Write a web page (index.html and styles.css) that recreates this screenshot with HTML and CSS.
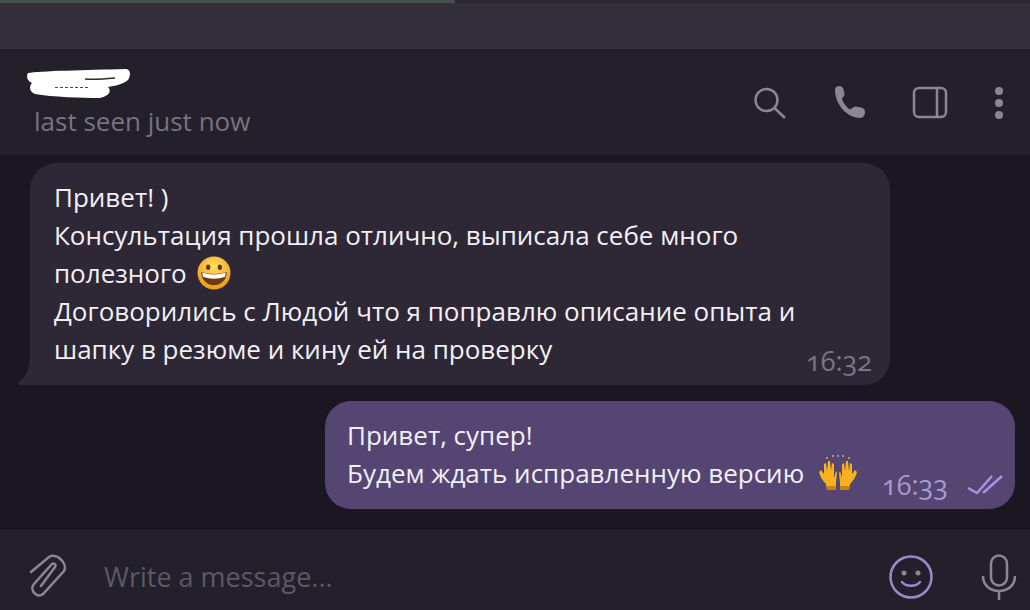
FILE: index.html
```html
<!DOCTYPE html>
<html lang="en">
<head>
  <meta charset="UTF-8">
  <title>Chat</title>
  <meta name="viewport" content="width=device-width, initial-scale=1.0">
  <link rel="stylesheet" href="styles.css">
</head>
<body>
  <div class="topband"><div class="loadbar"><div class="progress"></div></div></div>

  <header class="chat-head">
    <div class="peer">
      <svg class="scribble" width="110" height="34" viewBox="0 0 110 34">
        <path d="M1 6 C12 4 60 3 98 2 C104 2 104 8 101 13 C96 17 88 19 81 20 C84 23 84 28 73 31 C55 31 25 30 8 27 C2 25 2 19 5 16 C0 14 -1 9 1 6 Z" fill="#fff"/>
        <path d="M28 20.500 H62" stroke="#4a4650" stroke-width="1" stroke-dasharray="3 2"/>
        <path d="M58 12 C68 13 78 12 88 11" stroke="#2e2a36" stroke-width="1.500" fill="none"/>
      </svg>
      <div class="status">last seen just now</div>
    </div>
    <div class="head-icons">
      <svg width="34" height="34" viewBox="0 0 34 34" fill="none" stroke="#8b8792" stroke-width="2.500">
        <circle cx="14.500" cy="14" r="11"/>
        <path d="M22.500 22 L33 32"/>
      </svg>
      <svg width="34" height="34" viewBox="0 0 34 34" fill="#8b8792">
        <path d="M3 4 C3 1.500 5 0 7 0 C9.500 0 11 1.500 11.500 3.500 L12.500 8 C12.500 10 11 11 10 12 C10.500 16 14 21 18 23.500 C20 22.500 21.500 20.500 24 20.500 L29 21.500 C31.500 22 33 23.500 33 26 C33 29.500 31 32 28 32 C15 32 3 18 3 4 Z"/>
      </svg>
      <svg width="36" height="34" viewBox="0 0 36 34" fill="none" stroke="#8b8792" stroke-width="2.500">
        <rect x="2" y="2" width="32" height="29" rx="5"/>
        <path d="M25 2 V31"/>
      </svg>
      <svg width="10" height="34" viewBox="0 0 10 34" fill="#8b8792">
        <circle cx="5" cy="5" r="4"/>
        <circle cx="5" cy="17" r="4"/>
        <circle cx="5" cy="29" r="4"/>
      </svg>
    </div>
  </header>

  <main class="messages">
    <div class="bubble bubble-in">
      <svg class="tail" width="16" height="30" viewBox="0 0 16 30"><path d="M16 0 V30 H2 C0 30 -1 28 1 27 C9 22 12 12 12 0 Z" fill="#2e2736"/></svg>
      <p class="msg-text">Привет! )<br>
      Консультация прошла отлично, выписала себе много<br>
      полезного <svg class="emoji emoji-face" width="34" height="34" viewBox="0 0 32 32">
        <defs><radialGradient id="face" cx="50%" cy="30%" r="75%"><stop offset="0" stop-color="#ffdf5e"/><stop offset="1" stop-color="#ee9416"/></radialGradient></defs>
        <circle cx="16" cy="16" r="15.500" fill="url(#face)"/>
        <ellipse cx="10.500" cy="10.500" rx="2" ry="2.600" fill="#5a3a10"/>
        <ellipse cx="21.500" cy="10.500" rx="2" ry="2.600" fill="#5a3a10"/>
        <path d="M4 15 C11 17.500 21 17.500 28 15 C28 23 22 27.500 16 27.500 C10 27.500 4 23 4 15 Z" fill="#6b3a12"/>
        <path d="M5 15.500 C11 18 21 18 27 15.500 L26.500 19.500 C20 22 12 22 5.500 19.500 Z" fill="#fff"/>
      </svg><br>
      Договорились с Людой что я поправлю описание опыта и<br>
      шапку в резюме и кину ей на проверку</p>
      <span class="time time-in">16:32</span>
    </div>

    <div class="bubble bubble-out">
      <p class="msg-text">Привет, супер!<br>
      Будем ждать исправленную версию <svg class="emoji emoji-hands" width="38" height="36" viewBox="0 0 38 36">
        <g fill="#f7b21f">
          <path d="M0 17 L2 15 L5 19 L5 9 L7 8 L8 16 L9 6 L11 6 L12 16 L13 8 L15 9 L15 23 L17 16 L18 18 L17 28 L17 35 L8 35 L7 29 C4 26 1 22 0 17 Z"/>
          <path d="M38 17 L36 15 L33 19 L33 9 L31 8 L30 16 L29 6 L27 6 L26 16 L25 8 L23 9 L23 23 L21 16 L20 18 L21 28 L21 35 L30 35 L31 29 C34 26 37 22 38 17 Z"/>
        </g>
        <path d="M8 31 H17 V35 H8 Z M21 31 H30 V35 H21 Z" fill="#c9810f"/>
        <g fill="#c9bfa8">
          <circle cx="8" cy="3" r="0.900"/>
          <circle cx="14" cy="1" r="0.900"/>
          <circle cx="19" cy="0.900" r="0.900"/>
          <circle cx="24" cy="1" r="0.900"/>
          <circle cx="30" cy="3" r="0.900"/>
        </g>
      </svg></p>
      <span class="time time-out">16:33</span>
      <svg class="ticks" width="36" height="22" viewBox="0 0 36 22" fill="none" stroke="#a494e2" stroke-width="2.500">
        <path d="M1 13 L10 18 L25 1"/>
        <path d="M16 18 L35 1"/>
      </svg>
    </div>
  </main>

  <footer class="composer">
    <svg class="clip" width="42" height="46" viewBox="0 0 42 46" fill="none" stroke="#8b8792" stroke-width="2.500" stroke-linecap="round">
      <path d="M14 32 L28 13 C30 10 26 8 24 11 L7 30 C2 36 10 45 16 40 L37 17 C41 10 30 -2 22 3 L4 18"/>
    </svg>
    <div class="placeholder">Write a message...</div>
    <svg class="smile" width="44" height="44" viewBox="0 0 44 44" fill="none" stroke="#9b8ac8" stroke-width="2.500">
      <circle cx="22" cy="22" r="20.500"/>
      <circle cx="15" cy="18" r="2.500" fill="#8b8792" stroke="none"/>
      <circle cx="29" cy="18" r="2.500" fill="#8b8792" stroke="none"/>
      <path d="M13 27 C17 32 27 32 31 27" stroke-linecap="round"/>
    </svg>
    <svg class="mic" width="36" height="46" viewBox="0 0 36 46" fill="none" stroke="#8b8792" stroke-width="2.500">
      <rect x="10" y="1.500" width="16" height="30" rx="8"/>
      <path d="M2 22 C2 42 34 42 34 22"/>
      <path d="M18 37 V46"/>
    </svg>
  </footer>
</body>
</html>
```

FILE: styles.css
```css
* {
  box-sizing: border-box;
}

html, body {
  height: 100%;
}

body {
  margin: 0;
  height: 610px;
  overflow: hidden;
  display: flex;
  flex-direction: column;
  background-color: #1a1722;
  color: #f2f0f5;
  font-family: 'Open Sans', 'Noto Sans', sans-serif;
}

.topband {
  height: 49px;
  flex: none;
  background-color: #332f3b;
}

.loadbar {
  height: 3px;
  background-color: #2a2930;
}

.progress {
  width: 455px;
  height: 3px;
  background-color: #45504f;
}

.chat-head {
  height: 106px;
  flex: none;
  display: flex;
  align-items: flex-start;
  justify-content: space-between;
  padding: 18px 26px 0 27px;
  background-color: #231f2b;
}

.peer {
  display: flex;
  flex-direction: column;
}

.scribble {
  display: block;
}

.status {
  margin: 3px 0 0 7px;
  font-size: 26px;
  line-height: 34px;
  color: #77737f;
}

.head-icons {
  display: flex;
  align-items: center;
  gap: 46px;
  margin-top: 19px;
}

.messages {
  flex: 1;
  display: flex;
  flex-direction: column;
  align-items: flex-start;
  gap: 16px;
  padding: 8px 15px 0 30px;
}

.bubble {
  position: relative;
  border-radius: 26px;
}

.bubble-in {
  width: 860px;
  height: 222px;
  background-color: #2e2736;
  border-bottom-left-radius: 0;
}

.bubble-out {
  align-self: flex-end;
  width: 690px;
  height: 108px;
  background-color: #544573;
}

.tail {
  position: absolute;
  left: -12px;
  bottom: 0;
}

.msg-text {
  margin: 0;
  padding: 15px 0 0 24px;
  font-size: 26px;
  line-height: 38px;
  white-space: nowrap;
}

.bubble-out .msg-text {
  padding-left: 22px;
}

.emoji {
  vertical-align: -7px;
}

.emoji-face {
  margin-left: 3px;
}

.emoji-hands {
  margin-left: 8px;
  vertical-align: -8px;
}

.time {
  position: absolute;
  font-size: 27px;
  line-height: 30px;
  font-feature-settings: "onum";
}

.time-in {
  right: 18px;
  bottom: 9px;
  color: #7b7684;
}

.time-out {
  right: 67px;
  bottom: 9px;
  color: #a89ccb;
}

.ticks {
  position: absolute;
  right: 12px;
  bottom: 12px;
}

.composer {
  height: 80px;
  flex: none;
  display: flex;
  align-items: center;
  padding: 12px 13px 0 27px;
  background-color: #231f2b;
  border-top: 1px solid #2a2633;
}

.placeholder {
  flex: 1;
  margin-left: 35px;
  font-size: 27px;
  color: #5c5864;
}

.mic {
  margin-left: 48px;
}
```
